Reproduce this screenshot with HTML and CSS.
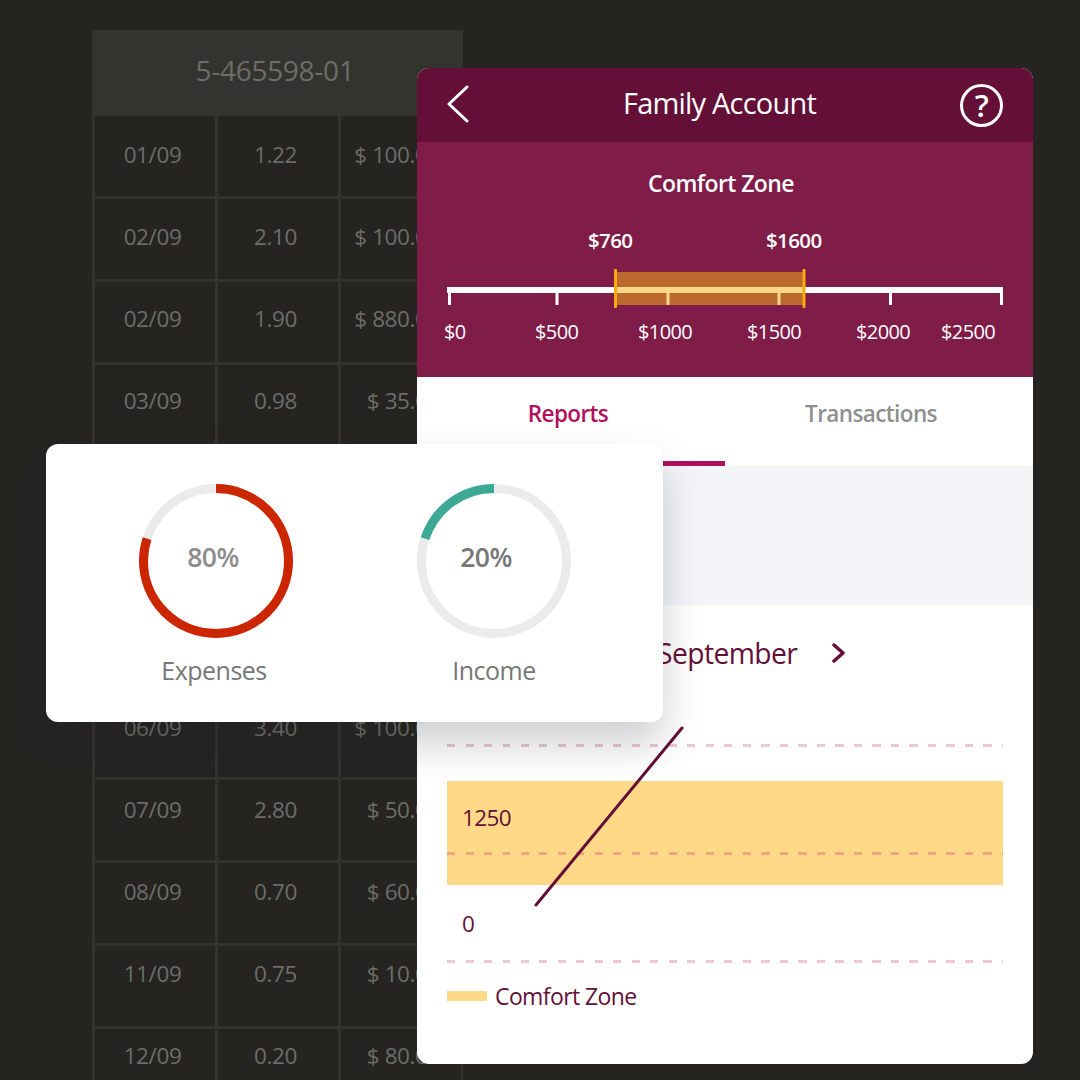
FILE: index.html
```html
<!DOCTYPE html>
<html lang="en">
<head>
    <meta charset="UTF-8">
    <meta name="viewport" content="width=device-width, initial-scale=1.0">
    <title>Family Account</title>
    <link rel="stylesheet" href="styles.css">
</head>
<body>
    <div class="stage">
        <!-- Statement table behind everything -->
        <section class="statement">
            <div class="statement-head">5-465598-01</div>
            <div class="statement-grid">
                <div>01/09</div><div>1.22</div><div>$ 100.00</div>
                <div>02/09</div><div>2.10</div><div>$ 100.00</div>
                <div>02/09</div><div>1.90</div><div>$ 880.00</div>
                <div>03/09</div><div>0.98</div><div>$ 35.00</div>
                <div>04/09</div><div>1.10</div><div>$ 20.00</div>
                <div>04/09</div><div>0.60</div><div>$ 40.00</div>
                <div>05/09</div><div>1.50</div><div>$ 70.00</div>
                <div>06/09</div><div>3.40</div><div>$ 100.00</div>
                <div>07/09</div><div>2.80</div><div>$ 50.00</div>
                <div>08/09</div><div>0.70</div><div>$ 60.00</div>
                <div>11/09</div><div>0.75</div><div>$ 10.00</div>
                <div>12/09</div><div>0.20</div><div>$ 80.00</div>
            </div>
        </section>

        <!-- Phone screen -->
        <section class="phone">
            <header class="topbar">
                <svg class="back-icon" width="24" height="38" viewBox="0 0 24 38">
                    <path d="M21 2 L3 19 L21 36" fill="none" stroke="#fff" stroke-width="3" stroke-linecap="round" stroke-linejoin="round"/>
                </svg>
                <h1 class="topbar-title">Family Account</h1>
                <span class="help-icon">?</span>
            </header>

            <div class="comfort">
                <h2 class="comfort-title">Comfort Zone</h2>
                <div class="range-labels">
                    <span>$760</span>
                    <span>$1600</span>
                </div>
                <svg class="scale" width="556" height="40" viewBox="0 0 556 40">
                    <rect x="168" y="4" width="189" height="33" fill="#bb692f"/>
                    <rect x="0" y="19" width="556" height="6" fill="#fff"/>
                    <rect x="168" y="19" width="189" height="6" fill="#ffd889"/>
                    <g fill="#fff">
                        <rect x="1" y="19" width="3" height="18"/>
                        <rect x="108.500" y="19" width="3" height="18"/>
                        <rect x="442" y="19" width="3" height="18"/>
                        <rect x="553" y="19" width="3" height="18"/>
                    </g>
                    <g fill="#ffd889">
                        <rect x="219.500" y="19" width="3" height="18"/>
                        <rect x="330.500" y="19" width="3" height="18"/>
                    </g>
                    <g fill="#fdaa0c">
                        <rect x="167" y="1" width="3" height="39" rx="1"/>
                        <rect x="355.500" y="1" width="3" height="39" rx="1"/>
                    </g>
                </svg>
                <div class="scale-labels">
                    <span>$0</span>
                    <span>$500</span>
                    <span>$1000</span>
                    <span>$1500</span>
                    <span>$2000</span>
                    <span>$2500</span>
                </div>
            </div>

            <nav class="tabs">
                <a href="#" class="tab tab-active">Reports</a>
                <a href="#" class="tab tab-second">Transactions</a>
            </nav>

            <div class="summary-band"></div>

            <div class="month-row">
                <span class="month-name">September</span>
                <svg width="14" height="20" viewBox="0 0 14 20">
                    <path d="M2 2 L11 10 L2 18" fill="none" stroke="#640f37" stroke-width="3.500" stroke-linecap="round" stroke-linejoin="round"/>
                </svg>
            </div>

            <div class="chart">
                <div class="dash"></div>
                <div class="zone">
                    <span class="chart-value">1250</span>
                    <div class="dash dash-on-zone"></div>
                </div>
                <span class="chart-value chart-zero">0</span>
                <div class="dash"></div>
                <div class="legend">
                    <span class="legend-swatch"></span>
                    <span>Comfort Zone</span>
                </div>
                <svg class="trend" width="150" height="181" viewBox="0 0 150 181">
                    <path d="M2 179 L148 2" fill="none" stroke="#640f37" stroke-width="3" stroke-linecap="round"/>
                </svg>
            </div>
        </section>

        <!-- Expenses / income card floating on top -->
        <section class="ratio-card">
            <div class="ratio">
                <div class="ring">
                    <svg width="154" height="154" viewBox="0 0 154 154">
                        <circle cx="77" cy="77" r="72.500" fill="none" stroke="#ebebeb" stroke-width="9"/>
                        <circle class="ring-value" cx="77" cy="77" r="72.500" pathLength="100" stroke="#cc2600" stroke-dasharray="80 20"/>
                    </svg>
                    <span class="ring-label ring-label-light">80%</span>
                </div>
                <span class="ratio-name ratio-name-shifted">Expenses</span>
            </div>
            <div class="ratio">
                <div class="ring">
                    <svg width="154" height="154" viewBox="0 0 154 154">
                        <circle cx="77" cy="77" r="72.500" fill="none" stroke="#ebebeb" stroke-width="9"/>
                        <circle class="ring-value" cx="77" cy="77" r="72.500" pathLength="100" stroke="#3da994" stroke-dasharray="20 80" stroke-dashoffset="20"/>
                    </svg>
                    <span class="ring-label ring-label-shifted">20%</span>
                </div>
                <span class="ratio-name">Income</span>
            </div>
        </section>
    </div>
</body>
</html>
```

FILE: styles.css
```css
* {
    box-sizing: border-box;
}

body {
    margin: 0;
    background: #252421;
    font-family: "Open Sans", "Noto Sans", Arial, sans-serif;
}

.stage {
    position: relative;
    width: 1080px;
    height: 1080px;
    overflow: hidden;
    background: #252421;
}

/* Statement table */
.statement {
    width: 371px;
    margin-left: 92px;
    padding-top: 30px;
}

.statement-head {
    height: 86px;
    padding: 21px 5px 0 0;
    background: #33342f;
    color: #6c6d68;
    font-size: 28px;
    line-height: 38px;
    letter-spacing: -0.3px;
    text-align: center;
}

/* the drawn lines run a little wider apart than the rows of text */
.statement-grid {
    display: grid;
    grid-template-columns: repeat(3, 121px);
    grid-auto-rows: 81.900px;
    column-gap: 2px;
    background-image:
        repeating-linear-gradient(180deg, transparent 0 80px, #32332e 80px 83px),
        repeating-linear-gradient(90deg, #32332e 0 3px, transparent 3px 123px);
}

.statement-grid div {
    color: #6c6d68;
    font-size: 22.500px;
    line-height: 78px;
    letter-spacing: -0.4px;
    text-align: center;
    white-space: nowrap;
}

.statement-grid div:nth-child(3n) {
    padding-right: 19px;
    text-align: right;
}

/* Phone */
.phone {
    position: absolute;
    left: 417px;
    top: 68px;
    width: 616px;
    height: 996px;
    background: #fff;
    border-radius: 12px;
    overflow: hidden;
    letter-spacing: -0.6px;
}

.topbar {
    display: flex;
    align-items: center;
    justify-content: space-between;
    height: 74px;
    padding: 0 30px 0 29px;
    background: #640f37;
    color: #fff;
}

.back-icon {
    margin-bottom: 2px;
}

.topbar-title {
    margin: 0 0 5px 9px;
    font-size: 29px;
    font-weight: 400;
    letter-spacing: -0.8px;
}

.help-icon {
    width: 43px;
    height: 43px;
    border: 3px solid #fff;
    border-radius: 50%;
    font-size: 31px;
    font-weight: 600;
    line-height: 36px;
    text-align: center;
}

.comfort {
    height: 235px;
    padding: 27px 30px 0;
    background: #7f1c48;
    color: #fff;
}

.comfort-title {
    margin: 0 8px 0 0;
    font-size: 23px;
    font-weight: 600;
    line-height: 28px;
    text-align: center;
}

.range-labels {
    display: grid;
    grid-template-columns: 178px auto;
    margin-top: 30px;
    padding-left: 141px;
    font-size: 20.500px;
    font-weight: 600;
    line-height: 26px;
}

.scale {
    display: block;
    margin-top: 15px;
}

.scale-labels {
    display: grid;
    grid-template-columns: 91px 103px 109px 109px 85px auto;
    margin-top: 11px;
    margin-left: -3px;
    font-size: 20px;
    line-height: 26px;
}

.tabs {
    display: flex;
    height: 89px;
}

.tab {
    width: 308px;
    padding: 21px 6px 0 0;
    color: #8f8f8f;
    font-size: 22.500px;
    font-weight: 600;
    line-height: 32px;
    text-align: center;
    text-decoration: none;
}

.tab-active {
    color: #b0105c;
    border-bottom: 5px solid #b0105c;
}

.tab-second {
    padding-right: 16px;
}

.summary-band {
    height: 139px;
    background: #f3f5f9;
}

.month-row {
    display: flex;
    align-items: center;
    gap: 35px;
    height: 98px;
    padding: 0 0 2px 240px;
    color: #640f37;
}

.month-name {
    font-size: 28.300px;
}

/* Chart */
.chart {
    position: relative;
    padding: 41px 30px 0;
    color: #640f37;
}

.dash {
    height: 3px;
    background: repeating-linear-gradient(90deg, #efc6d6 0 8px, transparent 8px 18.500px);
}

.dash-on-zone {
    margin-top: 19px;
    background: repeating-linear-gradient(90deg, #f0a67e 0 8px, transparent 8px 18.500px);
}

.zone {
    height: 104px;
    margin-top: 34px;
    padding-top: 22px;
    background: #ffd888;
}

.chart-value {
    display: block;
    padding-left: 15px;
    font-size: 22.500px;
    line-height: 30px;
}

.chart-zero {
    margin-top: 24px;
    margin-bottom: 21px;
}

.legend {
    display: flex;
    align-items: center;
    gap: 8px;
    margin-top: 18px;
    font-size: 23px;
    line-height: 30px;
}

.legend-swatch {
    width: 40px;
    height: 10px;
    background: #ffd888;
}

.trend {
    position: absolute;
    left: 117px;
    top: 23px;
}

/* Floating card */
.ratio-card {
    position: absolute;
    left: 46px;
    top: 444px;
    display: flex;
    gap: 124px;
    width: 617px;
    height: 278px;
    padding: 40px 0 0 93px;
    background: #fff;
    border-radius: 12px;
    box-shadow: 0 22px 40px rgba(36, 38, 44, 0.22);
    letter-spacing: -0.5px;
}

.ratio {
    display: flex;
    flex-direction: column;
    align-items: center;
    width: 154px;
}

.ring {
    position: relative;
    width: 154px;
    height: 154px;
}

.ring svg {
    display: block;
    transform: rotate(-90deg);
}

.ring-value {
    fill: none;
    stroke-width: 9;
}

.ring-label {
    position: absolute;
    left: 0;
    right: 6px;
    top: 56px;
    color: #777;
    font-size: 26.500px;
    font-weight: 600;
    line-height: 34px;
    text-align: center;
}

.ring-label-light {
    color: #8c8c8c;
}

.ring-label-shifted {
    right: 16px;
}

.ratio-name {
    margin-top: 16px;
    color: #777;
    font-size: 25px;
    line-height: 32px;
    white-space: nowrap;
}

.ratio-name-shifted {
    margin-right: 4px;
}
```
